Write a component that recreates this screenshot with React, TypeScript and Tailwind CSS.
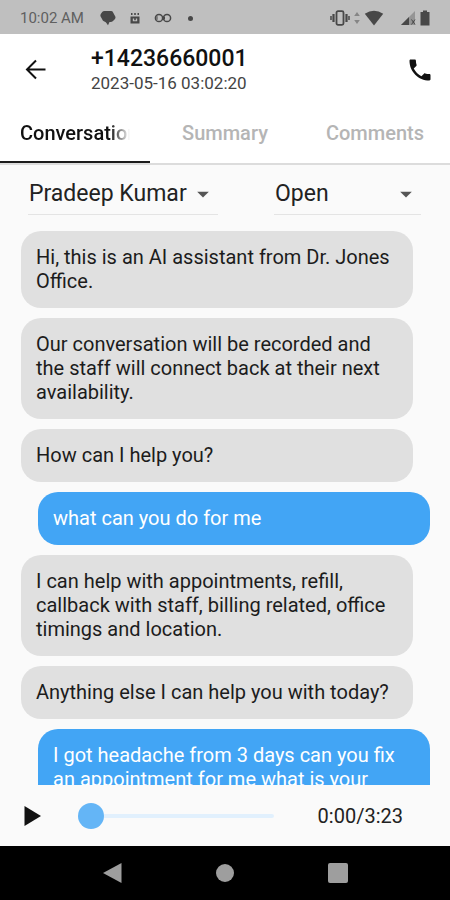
import { useState } from 'react';
import { MdArrowDropDown, MdPhone } from 'react-icons/md';

interface Message {
    id: number;
    from: 'assistant' | 'caller';
    text: string;
}

const messages: Message[] = [
    { id: 1, from: 'assistant', text: 'Hi, this is an AI assistant from Dr. Jones Office.' },
    {
        id: 2,
        from: 'assistant',
        text: 'Our conversation will be recorded and the staff will connect back at their next availability.',
    },
    { id: 3, from: 'assistant', text: 'How can I help you?' },
    { id: 4, from: 'caller', text: 'what can you do for me' },
    {
        id: 5,
        from: 'assistant',
        text: 'I can help with appointments, refill, callback with staff, billing related, office timings and location.',
    },
    { id: 6, from: 'assistant', text: 'Anything else I can help you with today?' },
    { id: 7, from: 'caller', text: 'I got headache from 3 days can you fix an appointment for me what is your' },
];

const tabs = ['Conversation', 'Summary', 'Comments'];

function StatusBar() {
    return (
        <div className="flex h-[34px] shrink-0 items-center justify-between bg-[#bfbfbf] px-5 pt-0.5 text-[#484848]">
            <div className="flex items-center">
                <span className="text-[15px] text-[#606060]">10:02 AM</span>
                {/* chat bubble */}
                <svg viewBox="0 0 16 16" className="ml-4 h-4 w-4" fill="currentColor">
                    <path d="M4.500 1H11q1.600 0 2.100 1.400l2.200 4q.6 1.400-.3 2.600L13 11q-.9 1-2.400 1H9.500L8 15.200 5.800 12.200 3 10.800.6 6.500Q0 5.200.8 4L2.200 2Q3 1 4.500 1z" />
                </svg>
                {/* calendar */}
                <svg viewBox="0 0 10 12" className="ml-3.5 h-3 w-2.5" fill="currentColor">
                    <path d="M.5 4.500h9v7h-9zM2.800 6.500v2.800h4.400V6.500z" fillRule="evenodd" />
                    <path d="M1 1h1.500v2H1zM4.200 1h1.600v2H4.200zM7.500 1H9v2H7.500z" />
                    <path d="M4.200 5.500h1.600v2.800H4.200z" />
                </svg>
                {/* voicemail */}
                <svg
                    viewBox="0 0 18 10"
                    className="ml-3.5 h-2.5 w-[18px]"
                    fill="none"
                    stroke="currentColor"
                    strokeWidth="1.500"
                >
                    <circle cx="5" cy="5" r="3.600" />
                    <circle cx="13" cy="5" r="3.600" />
                    <path d="M3 3.200v3.600M10.500 3.500v3" strokeWidth="1" />
                </svg>
                <span className="ml-4 h-[5px] w-[5px] rounded-full bg-current" />
            </div>
            <div className="flex items-center">
                {/* vibrate */}
                <svg viewBox="0 0 20 16" className="h-4 w-5" fill="none" stroke="currentColor">
                    <rect x="6.500" y="1.200" width="7" height="13.600" rx="1.500" strokeWidth="1.800" />
                    <path d="M3.500 4v8M16.500 4v8" strokeWidth="2.200" />
                    <path d="M1 6v4M19 6v4" strokeWidth="1.500" />
                </svg>
                <svg viewBox="0 0 6 14" className="ml-1 h-3.5 w-1.5 text-[#858585]" fill="currentColor">
                    <path d="M3 1l2.800 4H.2zM3 13L.2 9h5.600z" />
                </svg>
                <svg viewBox="0 0 20 16" className="ml-1 h-4 w-5" fill="currentColor">
                    <path d="M.8 3.800Q10-2.500 19.200 3.800L10 15.500z" />
                </svg>
                {/* signal */}
                <svg viewBox="0 0 16 16" className="ml-4 h-4 w-4" fill="currentColor">
                    <path d="M15 1v14H1z" opacity=".35" />
                    <path d="M9 7v8H1z" />
                    <path d="M11.500 9.500l3.500 5M15 9.500l-3.500 5" stroke="currentColor" strokeWidth="1" />
                </svg>
                <svg viewBox="0 0 10 16" className="ml-1 h-4 w-2.5" fill="currentColor">
                    <path d="M3 .5h4V2h2.500v13.500h-9V2H3z" />
                </svg>
            </div>
        </div>
    );
}

function Header() {
    return (
        <header className="flex h-[72px] shrink-0 items-center bg-white pr-4 pl-6">
            <button type="button" aria-label="Back">
                <svg viewBox="0 0 24 24" className="h-6 w-6" fill="none" stroke="currentColor" strokeWidth="2">
                    <path d="M21.500 11.500H3.200M12 2.500l-9 9 9 9" />
                </svg>
            </button>
            <div className="ml-[43px] flex-1">
                <h1 className="text-[23px] leading-[26px] font-medium">+14236660001</h1>
                <p className="text-[17px] leading-[22px] text-[#444]">2023-05-16 03:02:20</p>
            </div>
            <button type="button" aria-label="Call">
                <MdPhone className="h-7 w-7" />
            </button>
        </header>
    );
}

function ChatBubble({ message }: { message: Message }) {
    const isCaller = message.from === 'caller';
    return (
        <li
            className={
                isCaller
                    ? 'ml-[17px] rounded-[20px] bg-[#42a5f5] px-[15px] pt-3.5 pb-[15px] text-white'
                    : 'mr-[17px] rounded-[20px] bg-[#e0e0e0] px-[15px] pt-3.5 pb-[15px] text-[#1c1c1c]'
            }
        >
            {message.text}
        </li>
    );
}

export default function App() {
    const [activeTab, setActiveTab] = useState('Conversation');
    const [position, setPosition] = useState(0);

    return (
        <div className="flex h-dvh flex-col overflow-hidden bg-[#fafafa] font-['Roboto',sans-serif] text-[#111]">
            <StatusBar />
            <Header />

            {/* Tabs */}
            <nav role="tablist" className="grid h-[59px] shrink-0 grid-cols-3 border-b-2 border-[#dcdcdc] bg-white">
                {tabs.map((tab) => (
                    <button
                        key={tab}
                        type="button"
                        role="tab"
                        aria-selected={tab === activeTab}
                        onClick={() => setActiveTab(tab)}
                        className={
                            tab === activeTab
                                ? 'border-b-2 border-[#1c1c1c] px-5 pb-0.5 text-[20px] font-medium'
                                : 'border-b-2 border-transparent px-5 pb-0.5 text-[20px] font-medium text-[#b5b5b5]'
                        }
                    >
                        <span
                            className={
                                tab === 'Conversation'
                                    ? 'block overflow-hidden whitespace-nowrap [mask-image:linear-gradient(to_right,black_82%,transparent)]'
                                    : 'block whitespace-nowrap'
                            }
                        >
                            {tab}
                        </span>
                    </button>
                ))}
            </nav>

            {/* Assignee and status */}
            <div className="flex shrink-0 justify-between pt-[9px] pr-[29px] pl-7">
                <div className="relative w-[190px] border-b border-[#e4e4e4]">
                    <select
                        aria-label="Assignee"
                        className="block h-10 w-full appearance-none bg-transparent pl-px text-[23px] text-[#222]"
                    >
                        <option>Pradeep Kumar</option>
                    </select>
                    <MdArrowDropDown className="pointer-events-none absolute top-1.5 right-px h-7 w-7 text-[#555]" />
                </div>
                <div className="relative w-[147px] border-b border-[#e4e4e4]">
                    <select
                        aria-label="Status"
                        className="block h-10 w-full appearance-none bg-transparent pl-px text-[23px] text-[#222]"
                    >
                        <option>Open</option>
                    </select>
                    <MdArrowDropDown className="pointer-events-none absolute top-1.5 right-px h-7 w-7 text-[#555]" />
                </div>
            </div>

            {/* Transcript */}
            <ul className="mt-4 flex min-h-0 flex-1 flex-col gap-2.5 overflow-hidden pr-5 pl-[21px] text-[20px] leading-6">
                {messages.map((message) => (
                    <ChatBubble key={message.id} message={message} />
                ))}
            </ul>

            {/* Player */}
            <div className="flex h-[61px] shrink-0 items-center pr-[47px] pl-6">
                <button type="button" aria-label="Play">
                    <svg viewBox="0 0 18 20" className="h-5 w-[18px]" fill="currentColor">
                        <path d="M.5 0v20L17 10z" />
                    </svg>
                </button>
                <input
                    type="range"
                    aria-label="Playback position"
                    min={0}
                    max={203}
                    value={position}
                    onChange={(e) => setPosition(Number(e.target.value))}
                    className="ml-9 h-[26px] min-w-0 flex-1 appearance-none bg-transparent [&::-webkit-slider-runnable-track]:h-1 [&::-webkit-slider-runnable-track]:rounded-full [&::-webkit-slider-runnable-track]:bg-[#e1f0fd] [&::-webkit-slider-thumb]:-mt-[11px] [&::-webkit-slider-thumb]:h-[26px] [&::-webkit-slider-thumb]:w-[26px] [&::-webkit-slider-thumb]:appearance-none [&::-webkit-slider-thumb]:rounded-full [&::-webkit-slider-thumb]:bg-[#64b5f6]"
                />
                <span className="ml-11 text-[20px] text-[#222]">0:00/3:23</span>
            </div>

            {/* System navigation */}
            <div className="grid h-[54px] shrink-0 grid-cols-3 bg-black px-14 text-[#9e9e9e]">
                <button type="button" aria-label="System back" className="flex items-center justify-center">
                    <svg viewBox="0 0 20 20" className="h-5 w-5" fill="currentColor">
                        <path d="M19.500 0v20L1 10z" />
                    </svg>
                </button>
                <button type="button" aria-label="Home" className="flex items-center justify-center">
                    <span className="h-[18px] w-[18px] rounded-full bg-current" />
                </button>
                <button type="button" aria-label="Recent apps" className="flex items-center justify-center">
                    <span className="h-5 w-5 rounded-xs bg-current" />
                </button>
            </div>
        </div>
    );
}
